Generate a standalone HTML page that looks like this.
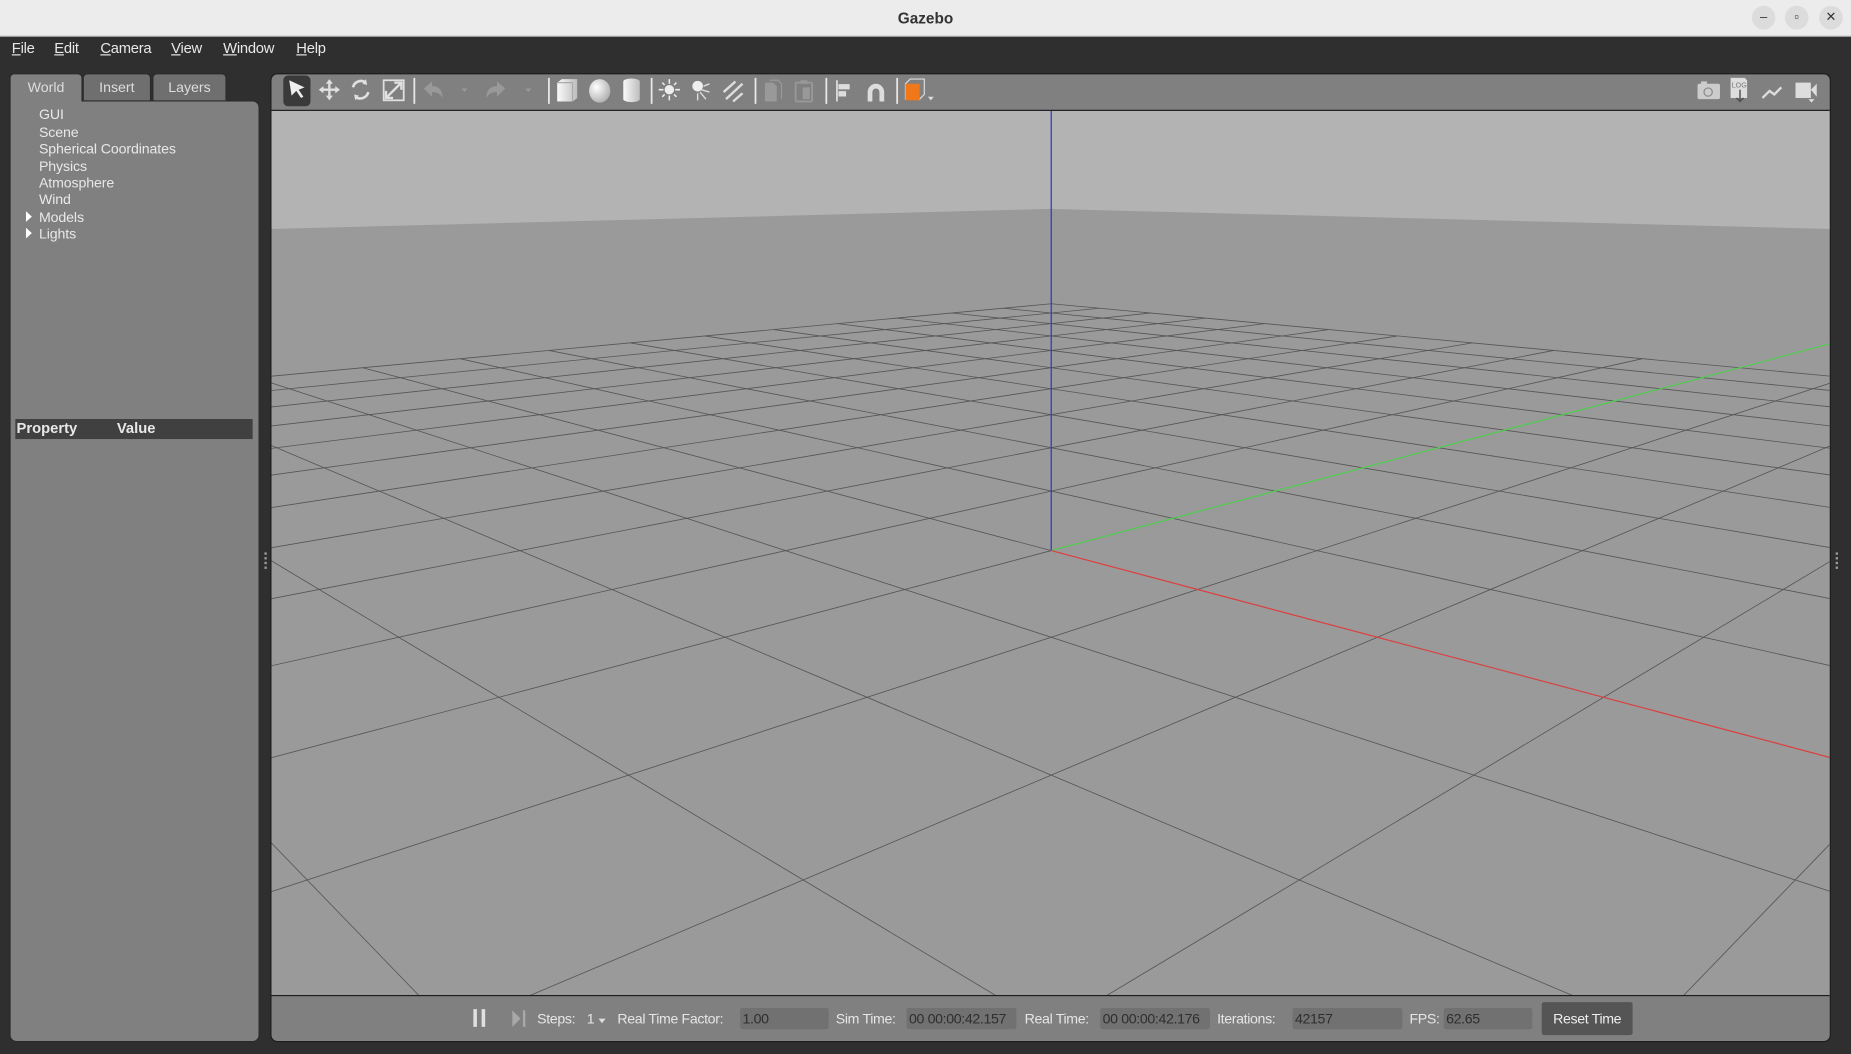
<!DOCTYPE html>
<html><head><meta charset="utf-8"><style>
*{margin:0;padding:0;box-sizing:border-box}
html,body{width:1851px;height:1054px;overflow:hidden;background:#2f2f2f;font-family:"Liberation Sans",sans-serif}
#root{position:absolute;left:0;top:0;width:1568px;height:893px;transform-origin:0 0;transform:scale(1.18048,1.18029);background:#2f2f2f;overflow:hidden}
.a{position:absolute}
.title{left:0;top:0;width:1568px;height:31px;background:#ececec;border-bottom:1px solid #cfcfcf}
.title span{position:absolute;left:0;right:0;top:8px;text-align:center;font-size:13px;font-weight:bold;color:#333}
.wc{top:5px;width:20px;height:20px;border-radius:50%;background:#dcdcdc;color:#333;font-size:11px;text-align:center;line-height:20px}
.menu{top:34px;font-size:12.5px;color:#e8e8e8;letter-spacing:-0.2px}
.menu span{position:absolute;white-space:nowrap}
.menu u{text-decoration:underline}
.tab{top:62px;height:23px;font-size:12px;color:#ddd;text-align:center;line-height:22px;border:1px solid #2a2a2a;border-bottom:none;border-radius:4px 4px 0 0}
.tree{font-size:12px;color:#e8e8e8;left:33px;letter-spacing:-0.1px}
.lbl{font-size:12px;color:#e6e6e6;top:856px;white-space:nowrap;letter-spacing:-0.3px}
.inp{top:854px;height:18px;background:#717171;border-radius:2px;font-size:12px;color:#2e2e2e;padding-left:2px;line-height:18px;letter-spacing:-0.3px}
</style></head><body><div id="root">
<div class="a title"><span>Gazebo</span></div>
<div class="a wc" style="left:1484px">–</div>
<div class="a wc" style="left:1512px">▫</div>
<div class="a wc" style="left:1541px">✕</div>
<div class="a menu" style="left:0;width:400px">
<span style="left:10px"><u>F</u>ile</span><span style="left:46px"><u>E</u>dit</span><span style="left:85px"><u>C</u>amera</span><span style="left:145px"><u>V</u>iew</span><span style="left:189px"><u>W</u>indow</span><span style="left:251px"><u>H</u>elp</span></div>
<div class="a" style="left:8px;top:85px;width:212px;height:798px;background:#808080;border-radius:0 6px 6px 6px;border:1px solid #2a2a2a"></div>
<div class="a tab" style="left:8px;width:62px;background:#808080;height:24px;border-color:#2a2a2a">World</div>
<div class="a tab" style="left:70px;width:58px;background:#6f6f6f">Insert</div>
<div class="a tab" style="left:129px;width:63px;background:#6f6f6f">Layers</div>
<div class="a tree" style="top:90px">GUI</div>
<div class="a tree" style="top:104.5px">Scene</div>
<div class="a tree" style="top:119px">Spherical Coordinates</div>
<div class="a tree" style="top:133.5px">Physics</div>
<div class="a tree" style="top:148px">Atmosphere</div>
<div class="a tree" style="top:162px">Wind</div>
<div class="a tree" style="top:176.5px">Models</div>
<div class="a tree" style="top:191px">Lights</div>
<svg class="a" style="left:20px;top:178px" width="8" height="30"><path d="M2 1v9l5-4.5z M2 15v9l5-4.5z" fill="#fff"/></svg>
<div class="a" style="left:13px;top:355px;width:201px;height:17px;background:#404040"></div>
<div class="a" style="left:14px;top:356px;font-size:12.5px;font-weight:bold;color:#e8e8e8">Property</div>
<div class="a" style="left:99px;top:356px;font-size:12.5px;font-weight:bold;color:#e8e8e8">Value</div>
<div class="a" style="left:224px;top:468px;width:2px;height:14px;border-left:2px dotted #999"></div>
<div class="a" style="left:1555px;top:468px;width:2px;height:14px;border-left:2px dotted #999"></div>
<div class="a" style="left:229px;top:62px;width:1322px;height:821px;background:#808080;border-radius:6px;border:1px solid #1e1e1e;overflow:hidden">
<svg id="v" class="a" style="left:0;top:31px" width="1320" height="749" viewBox="229 93 1320 749">
<rect x="229" y="93" width="1320" height="749" fill="#9a9a9a"/>
<polygon points="229,93 1549,93 1549,193 889,176 229,193" fill="#b3b3b3"/>
<g id="g" stroke="#555" stroke-width="0.7" fill="none"></g>
<line x1="889.5" y1="93" x2="889.5" y2="465.5" stroke="#3030c8" stroke-width="1"/>
<line id="gx" x1="889.5" y1="465.5" x2="1549" y2="290" stroke="#50d050" stroke-width="1"/>
<line id="rx" x1="889.5" y1="465.5" x2="1549" y2="645.5" stroke="#e04040" stroke-width="1"/>
</svg>
<div class="a" style="left:0;top:30px;width:1320px;height:1px;background:#1e1e1e"></div>
<div class="a" style="left:0;top:780px;width:1320px;height:1px;background:#1e1e1e"></div>
</div>
<svg class="a" style="left:229px;top:62px" width="1322" height="31" viewBox="229 62 1322 31">
<rect x="240" y="64" width="23" height="26" rx="4" fill="#3a3a3a"/>
<path d="M245 68l13 6-5 2 4 6-2 1-4-6-4 4z" fill="#eee"/>
<g fill="#e0e0e0"><path d="M279 67l3 4h-2v4h4v-2l4 3-4 3v-2h-4v4h2l-3 4-3-4h2v-4h-4v2l-4-3 4-3v2h4v-4h-2z"/></g>
<path d="M299 74a7 7 0 0 1 11-4M312 78a7 7 0 0 1-11 4" stroke="#e0e0e0" stroke-width="2.2" fill="none"/>
<path d="M310 67l1 5-4-1zM301 85l-1-5 4 1z" fill="#e0e0e0"/>
<rect x="325" y="68" width="17" height="17" fill="none" stroke="#e0e0e0" stroke-width="1.5"/>
<path d="M327 83l13-13M334 70h6v6M327 77v6h6" stroke="#e0e0e0" stroke-width="2" fill="none"/>
<g stroke="#e8e8e8" stroke-width="1.5"><line x1="351" y1="66" x2="351" y2="88"/><line x1="465" y1="66" x2="465" y2="88"/><line x1="552" y1="66" x2="552" y2="88"/><line x1="640" y1="66" x2="640" y2="88"/><line x1="700" y1="66" x2="700" y2="88"/><line x1="760" y1="66" x2="760" y2="88"/></g>
<path d="M359 75l7-6v4c6 0 9 4 9 10-2-4-5-5-9-5v4z" fill="#999"/>
<path d="M428 75l-7-6v4c-6 0-9 4-9 10 2-4 5-5 9-5v4z" fill="#999"/>
<path d="M391 75h5l-2.5 3z M445 75h5l-2.5 3z" fill="#999"/>
<defs><linearGradient id="sg" x1="0" x2="1"><stop offset="0" stop-color="#fafafa"/><stop offset="1" stop-color="#bdbdbd"/></linearGradient><radialGradient id="sp" cx=".35" cy=".35" r=".7"><stop offset="0" stop-color="#fff"/><stop offset="1" stop-color="#b0b0b0"/></radialGradient></defs>
<path d="M472 70l4-3h13v16l-4 3h-13z" fill="url(#sg)"/><path d="M472 70h13v16" stroke="#aaa" fill="none"/>
<ellipse cx="508" cy="77" rx="9" ry="10" fill="url(#sp)"/>
<path d="M528 69a7 2.5 0 0 1 14 0v15a7 2.5 0 0 1-14 0z" fill="url(#sg)"/>
<circle cx="567" cy="76" r="4" fill="#eee"/><g stroke="#eee" stroke-width="1.3"><path d="M567 67v4M567 81v4M558 76h4M572 76h4M561 70l2 2M571 80l2 2M573 70l-2 2M563 80l-2 2"/></g>
<circle cx="591" cy="73" r="4.5" fill="#eee"/><path d="M594 76l7 2M593 78l5 6M591 79l0 6M596 73l5-2" stroke="#ddd" stroke-width="1.2"/>
<path d="M613 78l10-9M615 84l14-13M621 86l8-7" stroke="#ddd" stroke-width="2"/>
<path d="M648 70h7l3 3v13h-10z" fill="#999"/><path d="M652 68h7l3 3v13" fill="none" stroke="#999"/>
<rect x="674" y="70" width="14" height="16" rx="1" fill="none" stroke="#999" stroke-width="1.5"/><rect x="678" y="68" width="6" height="3" fill="#999"/><rect x="680" y="74" width="6" height="10" fill="#999"/>
<path d="M709 68v18M711 72h8v3h-8zM711 78h5v3h-5z" stroke="#ddd" stroke-width="1.5" fill="#ddd"/>
<path d="M735 86v-8a7 7 0 0 1 14 0v8h-4v-8a3 3 0 0 0-6 0v8z" fill="#ddd"/>
<path d="M767 71l4-4h12v13l-4 4h-12z" fill="none" stroke="#ddd"/><rect x="767" y="71" width="12" height="14" fill="#f07818"/><path d="M786 82h5l-2.5 3z" fill="#ddd"/>
<rect x="1438" y="71" width="19" height="13" rx="1.5" fill="#ccc"/><rect x="1441" y="69" width="5" height="3" fill="#ccc"/><circle cx="1447" cy="78" r="3.5" fill="none" stroke="#888"/>
<path d="M1466 66h12l2 2v15h-14z" fill="#ddd"/><text x="1467" y="74" font-size="6" fill="#777" font-family="Liberation Sans">LOG</text><path d="M1474 76v10M1471 83l3 3 3-3" stroke="#555" stroke-width="1.3" fill="none"/>
<path d="M1493 83l6-6 4 3 6-6" stroke="#ddd" stroke-width="2" fill="none"/>
<rect x="1521" y="70" width="13" height="13" fill="#ddd"/><path d="M1534 76l5-5v11z" fill="#ddd"/><path d="M1532 84h5l-2.5 3z" fill="#ddd"/>
</svg>
<div class="a" style="left:401px;top:855px;width:3px;height:15px;background:#e0e0e0"></div>
<div class="a" style="left:408px;top:855px;width:3px;height:15px;background:#e0e0e0"></div>
<svg class="a" style="left:433px;top:855px" width="14" height="16"><path d="M1 1v14l7-7z" fill="#a8a8a8"/><rect x="10" y="1" width="2" height="14" fill="#a8a8a8"/></svg>
<div class="a lbl" style="left:455px">Steps:</div>
<div class="a lbl" style="left:497px">1</div>
<svg class="a" style="left:506px;top:862px" width="8" height="6"><path d="M1 1h6l-3 4z" fill="#ddd"/></svg>
<div class="a lbl" style="left:523px">Real Time Factor:</div>
<div class="a inp" style="left:627px;width:75px">1.00</div>
<div class="a lbl" style="left:708px">Sim Time:</div>
<div class="a inp" style="left:768px;width:93px">00 00:00:42.157</div>
<div class="a lbl" style="left:868px">Real Time:</div>
<div class="a inp" style="left:932px;width:93px">00 00:00:42.176</div>
<div class="a lbl" style="left:1031px">Iterations:</div>
<div class="a inp" style="left:1095px;width:93px">42157</div>
<div class="a lbl" style="left:1194px">FPS:</div>
<div class="a inp" style="left:1223px;width:75px">62.65</div>
<div class="a" style="left:1306px;top:849px;width:77px;height:28px;background:#555;border-radius:2px;color:#eee;font-size:12px;text-align:center;line-height:28px;letter-spacing:-0.3px">Reset Time</div>
</div>
<script>
var g=document.getElementById('g');
var O=[889.5,465.5],G=[2100.5,143.8],R=[-321.5,143.8],a=0.0929,b=-0.0929,N=10;
function P(s,t){var d=a*s+b*t+1;return [(a*s*G[0]+b*t*R[0]+O[0])/d,(a*s*G[1]+b*t*R[1]+O[1])/d,d];}
var h='';
function seg(f){var pts=[];for(var i=0;i<=800;i++){var u=-N+i*(2*N/800);var p=f(u);if(p[2]>0.02)pts.push(p);}
if(pts.length>1){h+='<line x1="'+pts[0][0]+'" y1="'+pts[0][1]+'" x2="'+pts[pts.length-1][0]+'" y2="'+pts[pts.length-1][1]+'"/>';}}
for(var k=-N;k<=N;k++){(function(k){seg(function(u){return P(k,u)});seg(function(u){return P(u,k)});})(k);}
g.innerHTML=h;
var pg=P(20,0),pr=P(0,9);
var gx=document.getElementById('gx'),rx=document.getElementById('rx');
gx.setAttribute('x2',pg[0]);gx.setAttribute('y2',pg[1]);
rx.setAttribute('x2',pr[0]);rx.setAttribute('y2',pr[1]);
</script>
</body></html>
